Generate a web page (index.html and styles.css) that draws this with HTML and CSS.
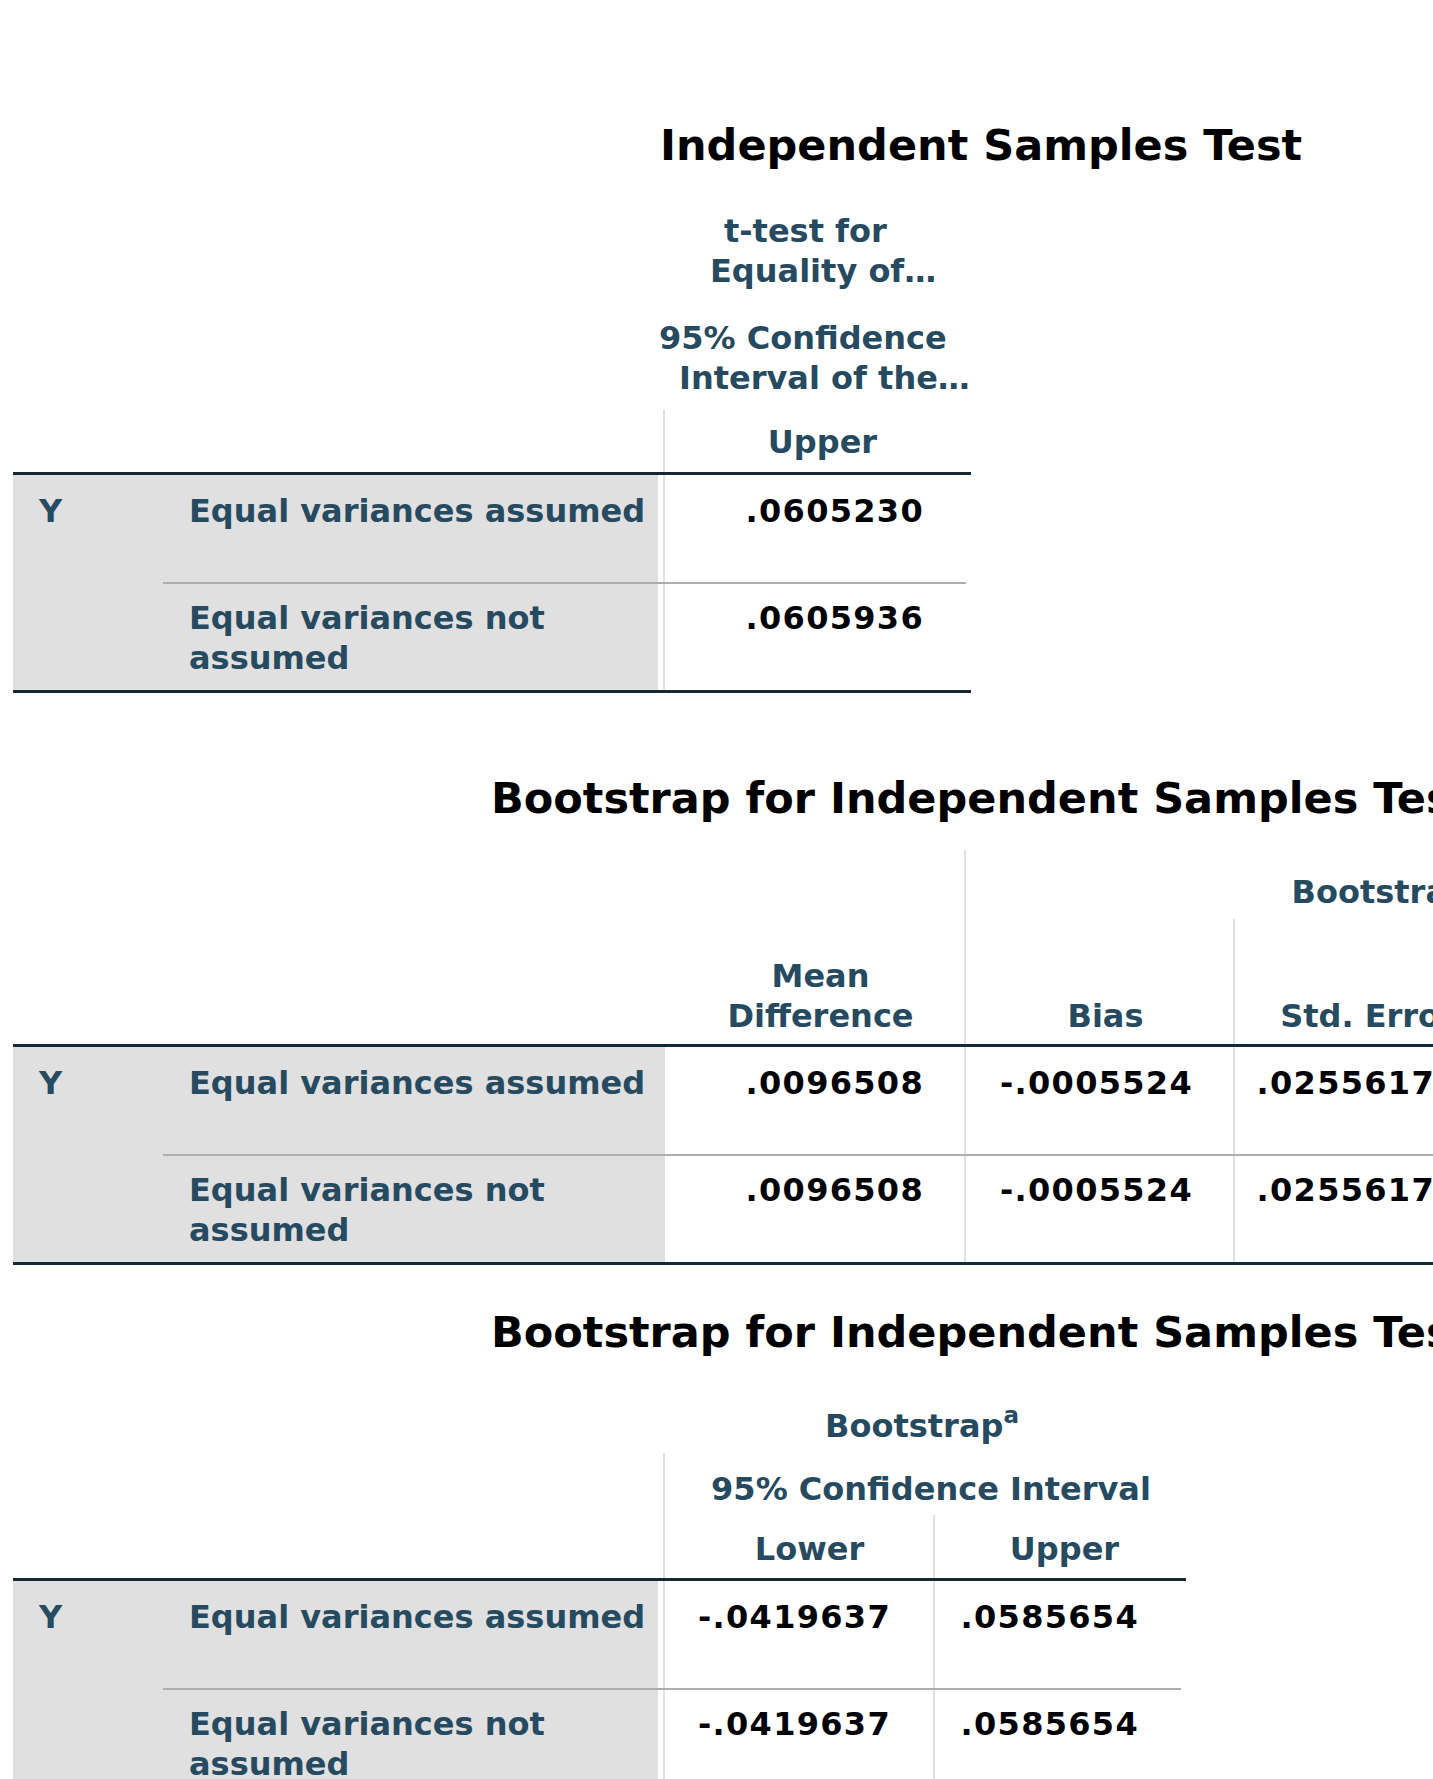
FILE: index.html
```html
<!DOCTYPE html>
<html lang="en">
<head>
<meta charset="utf-8">
<title>Independent Samples Test</title>
<link rel="stylesheet" href="styles.css">
</head>
<body>
<main class="page">

  <section class="pivot pivot-1">
    <h1 class="title title-1">Independent Samples Test</h1>
    <div class="grid g1">
      <div class="hd hd-left a-ha"><span class="ln ln-1">t-test for</span><span class="ln ln-2">Equality of…</span></div>
      <div class="hd hd-left a-hb"><span class="ln ln-3">95% Confidence</span><span class="ln ln-4">Interval of the…</span></div>
      <div class="hd hd-c1 bl a-hc">Upper</div>
      <div class="thick a-tt"></div>
      <div class="stub a-y">Y</div>
      <div class="lab a-l1">Equal variances assumed</div>
      <div class="num num-up bl a-v1">.0605230</div>
      <div class="sep a-sp"></div>
      <div class="lab r2 a-l2">Equal variances not assumed</div>
      <div class="num num-up r2 bl a-v2">.0605936</div>
      <div class="thick a-bb"></div>
    </div>
  </section>

  <section class="pivot pivot-2">
    <h1 class="title title-2">Bootstrap for Independent Samples Test</h1>
    <div class="grid g2">
      <div class="hd a-md"><span class="ln">Mean</span><span class="ln">Difference</span></div>
      <div class="hd hd-boot2 bl a-bt"><span class="ln">Bootstrap<sup class="fn">a</sup></span></div>
      <div class="hd bl a-bi">Bias</div>
      <div class="hd hd-se bl a-se">Std. Error</div>
      <div class="thick a-tt"></div>
      <div class="stub a-y">Y</div>
      <div class="lab a-l1">Equal variances assumed</div>
      <div class="num a-m1">.0096508</div>
      <div class="num bl a-b1">-.0005524</div>
      <div class="num num-se bl a-s1">.0255617</div>
      <div class="sep a-sp"></div>
      <div class="lab r2 a-l2">Equal variances not assumed</div>
      <div class="num r2 a-m2">.0096508</div>
      <div class="num r2 bl a-b2">-.0005524</div>
      <div class="num num-se r2 bl a-s2">.0255617</div>
      <div class="thick a-bb"></div>
    </div>
  </section>

  <section class="pivot pivot-3">
    <h1 class="title title-2">Bootstrap for Independent Samples Test</h1>
    <div class="grid g3">
      <div class="hd hd-boot3 a-bt"><span class="ln">Bootstrap<sup class="fn">a</sup></span></div>
      <div class="hd hd-ci bl a-ci">95% Confidence Interval</div>
      <div class="hd hd-lower bl a-lo">Lower</div>
      <div class="hd hd-upper bl a-up">Upper</div>
      <div class="thick a-tt"></div>
      <div class="stub a-y">Y</div>
      <div class="lab a-l1">Equal variances assumed</div>
      <div class="num num-lo bl a-v1">-.0419637</div>
      <div class="num num-up bl a-w1">.0585654</div>
      <div class="sep a-sp"></div>
      <div class="lab r2 a-l2">Equal variances not assumed</div>
      <div class="num num-lo r2 bl a-v2">-.0419637</div>
      <div class="num num-up r2 bl a-w2">.0585654</div>
      <div class="thick a-bb"></div>
    </div>
  </section>

</main>
</body>
</html>
```

FILE: styles.css
```css
html, body {
  margin: 0;
  padding: 0;
  overflow: hidden;
  background: #ffffff;
}

body {
  font-family: "DejaVu Sans", Verdana, sans-serif;
  font-weight: bold;
  color: #264a60;
}

.page {
  padding: 120px 0 0 13px;
}

.pivot-1 { margin-bottom: 80px; }
.pivot-2 { margin-bottom: 42px; }

.title {
  margin: 0 0 27px;
  font-size: 43px;
  line-height: 50px;
  font-weight: bold;
  color: #000000;
  white-space: nowrap;
}
.title-1 { padding-left: 647px; }
.title-2 { padding-left: 478px; }

.grid {
  display: grid;
  font-size: 32px;
  line-height: 40px;
}

.g1 {
  width: 958px;
  grid-template-columns: 150px 495px 5px 308px;
  grid-template-rows: 106px 107px 62px 3px 107px 2px 106px 3px;
  grid-template-areas:
    ". . ha ha"
    ". . hb hb"
    ". . . hc"
    "tt tt tt tt"
    "y l1 . v1"
    "y sp sp sp"
    "y l2 . v2"
    "bb bb bb bb";
}

.g2 {
  width: 1781px;
  grid-template-columns: 150px 502px 299px 269px 246px 315px;
  grid-template-rows: 69px 125px 3px 107px 2px 106px 3px;
  grid-template-areas:
    ". . md bt bt bt"
    ". . md bi se ."
    "tt tt tt tt tt tt"
    "y l1 m1 b1 s1 ."
    "y sp sp sp sp sp"
    "y l2 m2 b2 s2 ."
    "bb bb bb bb bb bb";
}

.g3 {
  width: 1173px;
  grid-template-columns: 150px 495px 5px 270px 253px;
  grid-template-rows: 69px 62px 63px 3px 107px 2px 106px 3px;
  grid-template-areas:
    ". . . bt bt"
    ". . . ci ci"
    ". . . lo up"
    "tt tt tt tt tt"
    "y l1 . v1 w1"
    "y sp sp sp sp"
    "y l2 . v2 w2"
    "bb bb bb bb bb";
}

/* grid areas */
.a-ha { grid-area: ha; }
.a-hb { grid-area: hb; }
.a-hc { grid-area: hc; }
.a-tt { grid-area: tt; }
.a-bb { grid-area: bb; }
.a-y  { grid-area: y; }
.a-l1 { grid-area: l1; }
.a-l2 { grid-area: l2; }
.a-sp { grid-area: sp; }
.a-v1 { grid-area: v1; }
.a-v2 { grid-area: v2; }
.a-w1 { grid-area: w1; }
.a-w2 { grid-area: w2; }
.a-md { grid-area: md; }
.a-bt { grid-area: bt; }
.a-bi { grid-area: bi; }
.a-se { grid-area: se; }
.a-m1 { grid-area: m1; }
.a-m2 { grid-area: m2; }
.a-b1 { grid-area: b1; }
.a-b2 { grid-area: b2; }
.a-s1 { grid-area: s1; }
.a-s2 { grid-area: s2; }
.a-ci { grid-area: ci; }
.a-lo { grid-area: lo; }
.a-up { grid-area: up; }

/* header cells */
.hd {
  display: flex;
  flex-direction: column;
  justify-content: flex-end;
  text-align: center;
  white-space: nowrap;
  padding: 0 0 8px 12px;
  color: #264a60;
}
.ln { display: block; }

.hd-left {
  text-align: left;
  padding-left: 0;
  padding-bottom: 12px;
}
.ln-1 { padding-left: 66px; }
.ln-2 { padding-left: 52px; }
.ln-3 { padding-left: 1px; }
.ln-4 { padding-left: 21px; }

.hd-c1 { padding-bottom: 10px; padding-left: 9px; }
.hd-boot2 { padding-left: 17px; padding-bottom: 7px; }
.hd-se { padding-left: 22px; }
.hd-boot3 { padding-left: 0; padding-right: 5px; padding-bottom: 7px; }
.hd-ci { padding-left: 11px; padding-bottom: 6px; }
.hd-lower { padding-left: 21px; padding-bottom: 9px; }
.hd-upper { padding-left: 8px; padding-bottom: 9px; }

.fn {
  font-size: 23px;
  line-height: 0;
  vertical-align: 14px;
}

.bl { border-left: 2px solid #e0e0e0; }

/* body cells */
.stub, .lab {
  background: #e0e0e0;
  color: #264a60;
  padding-top: 16px;
}
.stub { padding-left: 26px; }
.lab { padding-left: 26px; padding-right: 2px; }
.r2 { padding-top: 14px; }

.num {
  color: #010205;
  text-align: right;
  letter-spacing: 1.3px;
  white-space: nowrap;
  padding: 16px 40px 0 0;
}
.num.r2 { padding-top: 14px; }
.num-up { padding-right: 47px; }
.num-lo { padding-right: 42px; }
.num-se { padding-right: 44px; }

.thick { background: #152935; }
.sep {
  background: #aeaeae;
  margin-right: 5px;
}
```
